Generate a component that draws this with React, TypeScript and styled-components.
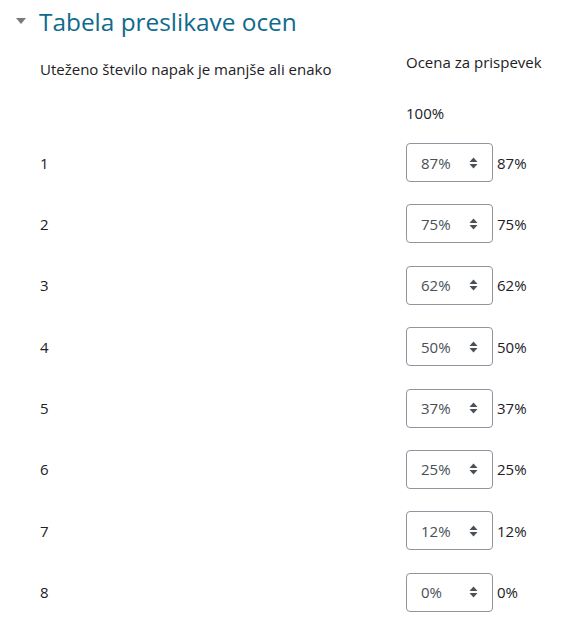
import styled, { createGlobalStyle } from "styled-components";

const GlobalStyle = createGlobalStyle`
  body {
    margin: 0;
    background: #ffffff;
    font-family: "Open Sans", "Noto Sans", sans-serif;
    color: #1d2125;
  }
`

const grades = [
  { errors: 1, value: 87 },
  { errors: 2, value: 75 },
  { errors: 3, value: 62 },
  { errors: 4, value: 50 },
  { errors: 5, value: 37 },
  { errors: 6, value: 25 },
  { errors: 7, value: 12 },
  { errors: 8, value: 0 },
]

const SpinIcon = () => (
  <svg width="9" height="12" viewBox="0 0 9 12">
    <path d="M4.5 0.5 L8.5 5 L0.5 5 Z" fill="#495057" />
    <path d="M4.5 11.5 L8.5 7 L0.5 7 Z" fill="#495057" />
  </svg>
)

const App = () => {
  return (
    <Page>
      <GlobalStyle />
      <Header>
        <Caret />
        <Heading>Tabela preslikave ocen</Heading>
      </Header>
      <Table>
        <HeadRow>
          <HeadLabel>Uteženo število napak je manjše ali enako</HeadLabel>
          <HeadValue>Ocena za prispevek</HeadValue>
        </HeadRow>
        <TopRow>
          <Label />
          <Value>100%</Value>
        </TopRow>
        {grades.map(g => (
          <Row key={g.errors}>
            <Label>{g.errors}</Label>
            <Field>
              <Select>
                <span>{`${g.value}%`}</span>
                <SpinIcon />
              </Select>
              <Value spaced>{`${g.value}%`}</Value>
            </Field>
          </Row>
        ))}
      </Table>
    </Page>
  )
}

const Page = styled.div`
  width: 569px;
  height: 625px;
  box-sizing: border-box;
  padding: 4px 0 0 16px;
  overflow: hidden;
`

const Header = styled.div`
  display: flex;
  align-items: center;
  height: 36px;
`

const Caret = styled.span`
  width: 0;
  height: 0;
  border-left: 5.5px solid transparent;
  border-right: 5.5px solid transparent;
  border-top: 6px solid #7a7a7a;
  margin-right: 13px;
  margin-top: -3px;
`

const Heading = styled.h3`
  margin: 0;
  font-size: 24.4px;
  font-weight: 400;
  color: #0f6a8c;
  line-height: 36px;
`

const Table = styled.div`
  display: flex;
  flex-direction: column;
  padding-left: 24px;
`

const HeadRow = styled.div`
  display: flex;
  margin-top: 10px;
  height: 50px;
`

const HeadLabel = styled.div`
  width: 366px;
  font-size: 15px;
  padding-top: 9px;
`

const HeadValue = styled.div`
  font-size: 15px;
  padding-top: 2px;
`

const TopRow = styled.div`
  display: flex;
  align-items: center;
  height: 26px;
  margin-bottom: 17px;
`

const Row = styled.div`
  display: flex;
  align-items: center;
  height: 39px;
  margin-bottom: 22.4px;
`

const Label = styled.div`
  width: 366px;
  font-size: 15px;
`

const Field = styled.div`
  display: flex;
  align-items: center;
`

const Select = styled.div`
  box-sizing: border-box;
  width: 87px;
  height: 39px;
  display: flex;
  align-items: center;
  justify-content: space-between;
  padding: 0 14px 0 14px;
  border: 1px solid #8f959e;
  border-radius: 4px;
  font-size: 15px;
  color: #495057;
`

const Value = styled.div<{ spaced?: boolean }>`
  font-size: 15px;
  margin-left: ${p => (p.spaced ? '4px' : '0')};
`

export default App
